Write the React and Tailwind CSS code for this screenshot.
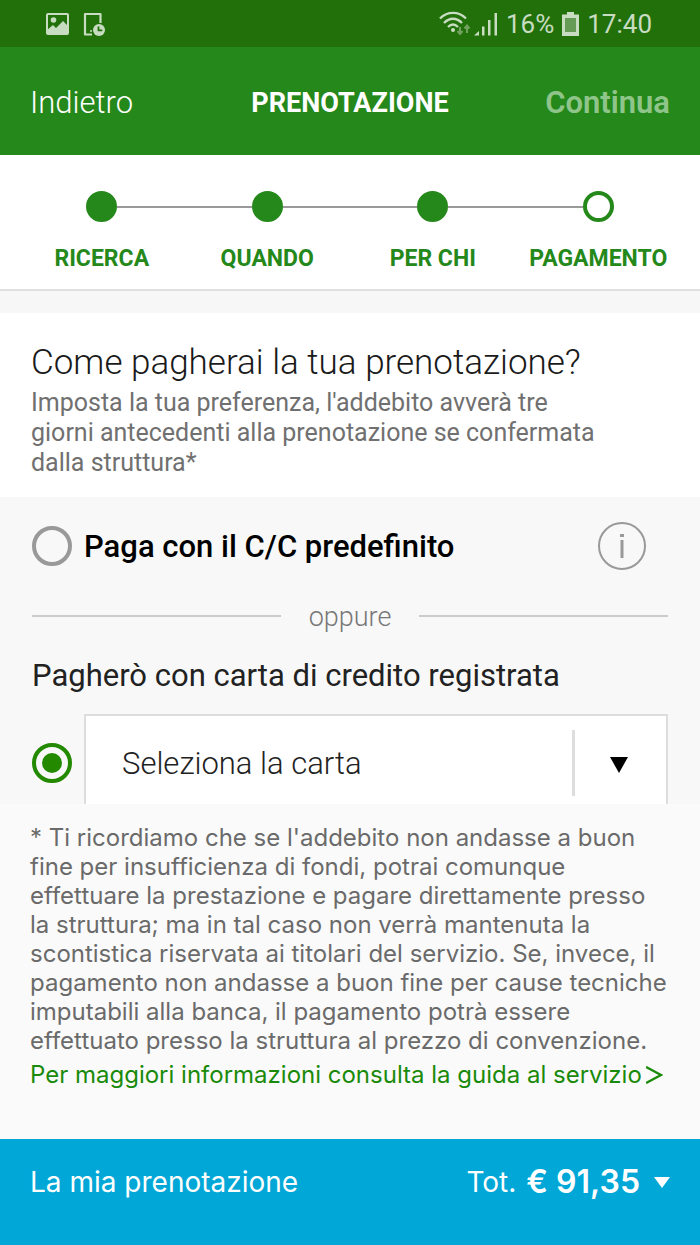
import React, { useState } from "react";

const STEPS = ["RICERCA", "QUANDO", "PER CHI", "PAGAMENTO"];

function StatusBar() {
  return (
    <div className="flex h-[47px] items-center justify-between bg-[#22700a] pl-[46px] pr-12 text-[#c8dcc2]">
      <div className="flex items-center gap-[13px]">
        <svg width="24" height="24" viewBox="0 0 24 24" aria-hidden="true">
          <rect x="1" y="2" width="21" height="20" rx="1" fill="none" stroke="currentColor" strokeWidth="2" />
          <circle cx="7.5" cy="8" r="2.8" fill="currentColor" />
          <path d="M1 18l6-5 3 3 7-7 5 5v8H1z" fill="currentColor" />
        </svg>
        <svg width="24" height="24" viewBox="0 0 24 24" aria-hidden="true">
          <path d="M9 22.500H2V2h15.500v9" fill="none" stroke="currentColor" strokeWidth="2.200" strokeLinejoin="round" />
          <circle cx="8" cy="19" r="1" fill="currentColor" />
          <circle cx="16" cy="18" r="6" fill="currentColor" />
          <path d="M15.500 14.500v3.800h3.800" fill="none" stroke="#22700a" strokeWidth="1.800" />
        </svg>
      </div>
      <div className="flex items-center text-[26px] leading-8">
        <svg width="32" height="26" viewBox="0 0 32 26" fill="none" stroke="currentColor" aria-hidden="true">
          <path d="M1 7.500C8.500 0 19.500 0 27 7.500M5 12c5.500-5.600 12.500-5.600 18 0M9 16c3.200-3.200 6.800-3.200 10 0" strokeWidth="2.400" />
          <circle cx="14" cy="19" r="2" fill="currentColor" stroke="none" />
          <path d="M21 16v7M18.500 20l2.500 3 2.500-3M28 22v-7.500M25.500 17.500l2.500-3 2.500 3" stroke="#71a05f" strokeWidth="2" />
        </svg>
        <svg className="ml-[3px]" width="24" height="24" viewBox="0 0 24 24" fill="currentColor" aria-hidden="true">
          <path d="M0 23.500h5v-4.500zM8 14.500h2.500v9H8zM14 8h2.500v15.500h-2.500zM20.500 1H23v22.500h-2.500z" />
        </svg>
        <span className="ml-2">16%</span>
        <svg className="ml-2" width="17" height="24" viewBox="0 0 17 24" aria-hidden="true">
          <path d="M5 0h7v2.500h5V24H0V2.500h5z" fill="currentColor" />
          <path d="M3 6h11v14H3z" fill="#659b54" />
        </svg>
        <span className="ml-2">17:40</span>
      </div>
    </div>
  );
}

function Stepper() {
  return (
    <ol className="grid grid-cols-4 border-b-2 border-[#e0e0e0] bg-white px-[19px] pb-[14px] pt-9">
      {STEPS.map((step, i) => (
        <li key={step} className="flex flex-col items-center">
          <div className="flex w-full items-center">
            <span className={`h-[2px] flex-1 ${i === 0 ? "" : "bg-[#999999]"}`} />
            <span
              className={`size-[31px] rounded-full border-4 border-[#25881a] ${
                i === STEPS.length - 1 ? "bg-white" : "bg-[#25881a]"
              }`}
            />
            <span className={`h-[2px] flex-1 ${i === STEPS.length - 1 ? "" : "bg-[#999999]"}`} />
          </div>
          <span className="mt-[21px] whitespace-nowrap text-[23px] font-bold leading-8 text-[#25881a]">{step}</span>
        </li>
      ))}
    </ol>
  );
}

function Radio(props) {
  return (
    <input
      type="radio"
      name="metodo"
      className="grid size-10 shrink-0 cursor-pointer appearance-none place-items-center rounded-full border-4 border-[#999999] before:size-5 before:rounded-full checked:border-[#238a00] checked:before:bg-[#238a00]"
      {...props}
    />
  );
}

export default function App() {
  const [method, setMethod] = useState("carta");
  const [card, setCard] = useState("");

  return (
    <div className="flex min-h-screen flex-col bg-[#fafafa] font-['Roboto',sans-serif]">
      <StatusBar />

      {/* Header */}
      <header className="flex h-[108px] items-center justify-between bg-[#25881a] px-[30px] pt-1 text-white">
        <button type="button" className="flex-1 text-left text-[31px] font-light">
          Indietro
        </button>
        <h1 className="text-[27px] font-bold">PRENOTAZIONE</h1>
        <button type="button" disabled className="flex-1 text-right text-[31px] font-semibold text-[#8fc58a]">
          Continua
        </button>
      </header>

      <Stepper />

      <main className="flex-1">
        <section className="border-t-[22px] border-[#f7f7f7] bg-white px-[31px] pb-[19px] pt-[29px]">
          <h2 className="text-[35px] font-light leading-[42px] text-[#1a1a1a]">Come pagherai la tua prenotazione?</h2>
          <p className="mt-1 max-w-[580px] text-[25px] leading-[30px] text-[#707070]">
            Imposta la tua preferenza, l'addebito avverà tre giorni antecedenti alla prenotazione se confermata dalla
            struttura*
          </p>
        </section>

        {/* Payment method */}
        <section className="bg-[#f8f8f8] px-8 pt-[25px]">
          <div className="flex items-center">
            <Radio id="conto" value="conto" checked={method === "conto"} onChange={() => setMethod("conto")} />
            <label htmlFor="conto" className="ml-3 flex-1 pt-[2px] text-[31px] font-medium text-black">
              Paga con il C/C predefinito
            </label>
            <button
              type="button"
              aria-label="Informazioni"
              className="mr-[22px] grid size-[48px] place-items-center rounded-full border-2 border-[#999999] text-[#999999]"
            >
              <svg width="4" height="24" viewBox="0 0 4 24" fill="currentColor" aria-hidden="true">
                <path d="M0 0h4v3H0zM.5 6h3v18h-3z" />
              </svg>
            </button>
          </div>

          <div className="mt-7 flex items-center gap-7">
            <span className="h-[2px] flex-1 bg-[#cccccc]" />
            <span className="pt-[2px] text-[27px] font-light leading-8 text-[#777777]">oppure</span>
            <span className="h-[2px] flex-1 bg-[#cccccc]" />
          </div>

          <label htmlFor="registrata" className="mt-[23px] block text-[31px] leading-10 text-[#222222]">
            Pagherò con carta di credito registrata
          </label>

          <div className="mt-[18px] flex items-center">
            <div className="flex pt-2">
              <Radio id="registrata" value="carta" checked={method === "carta"} onChange={() => setMethod("carta")} />
            </div>
            <div className="ml-3 flex h-[90px] flex-1 items-center border-x-2 border-t-2 border-[#dddddd] bg-white">
              <select
                aria-label="Carta"
                value={card}
                onChange={(e) => setCard(e.target.value)}
                className="h-full flex-1 appearance-none bg-transparent pl-9 pt-[10px] text-[31px] font-light text-[#222222]"
              >
                <option value="">Seleziona la carta</option>
              </select>
              <span className="mt-[6px] h-[66px] w-[3px] bg-[#dddddd]" />
              <svg className="ml-[35px] mr-[38px] mt-[10px]" width="18" height="16" viewBox="0 0 18 16" aria-hidden="true">
                <path d="M0 0h18L9 16z" fill="#000000" />
              </svg>
            </div>
          </div>
        </section>

        <section className="px-[30px] pt-[19px] font-['Inter',sans-serif] text-[24px]">
          <p className="leading-[29px] text-[#6a6a6a]">
            * Ti ricordiamo che se l'addebito non andasse a buon fine per insufficienza di fondi, potrai comunque
            effettuare la prestazione e pagare direttamente presso la struttura; ma in tal caso non verrà mantenuta la
            scontistica riservata ai titolari del servizio. Se, invece, il pagamento non andasse a buon fine per cause
            tecniche imputabili alla banca, il pagamento potrà essere effettuato presso la struttura al prezzo di
            convenzione.
          </p>
          <a href="#guida" className="mt-1 flex items-center gap-1 whitespace-nowrap leading-8 text-[#1a8a0a]">
            Per maggiori informazioni consulta la guida al servizio
            <svg width="17" height="18" viewBox="0 0 17 18" fill="none" stroke="currentColor" strokeWidth="2.400" aria-hidden="true">
              <path d="M0 1l15 8-15 8" />
            </svg>
          </a>
        </section>
      </main>

      {/* Summary */}
      <button
        type="button"
        className="flex h-[106px] items-center justify-between bg-[#00a7d7] px-[30px] pb-5 font-['Inter',sans-serif] text-white"
      >
        <span className="text-[28px]">La mia prenotazione</span>
        <span className="flex items-center">
          <span className="text-[28px]">Tot.</span>
          <span className="ml-[10px] text-[32px] font-semibold">€ 91,35</span>
          <svg className="ml-[14px]" width="16" height="11" viewBox="0 0 16 11" fill="currentColor" aria-hidden="true">
            <path d="M0 0h16L8 11z" />
          </svg>
        </span>
      </button>
    </div>
  );
}
